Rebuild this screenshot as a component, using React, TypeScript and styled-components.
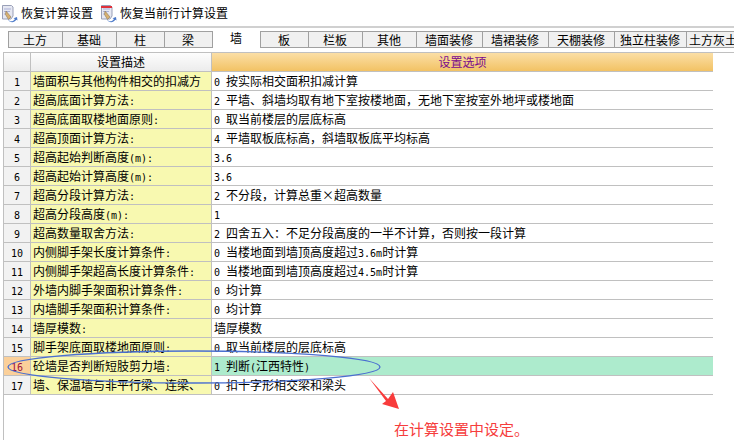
import { createGlobalStyle, styled } from 'styled-components';

const GlobalStyle = createGlobalStyle`
  html, body {
    margin: 0;
    width: 734px;
    height: 440px;
    overflow: hidden;
    background: #fff;
  }
  * {
    box-sizing: border-box;
  }
`;

const tabs = [
  { name: '土方', width: 54 },
  { name: '基础', width: 54 },
  { name: '柱', width: 48 },
  { name: '梁', width: 48 },
  { name: '墙', width: 48, active: true },
  { name: '板', width: 48 },
  { name: '栏板', width: 54 },
  { name: '其他', width: 54 },
  { name: '墙面装修', width: 66 },
  { name: '墙裙装修', width: 66 },
  { name: '天棚装修', width: 66 },
  { name: '独立柱装修', width: 72 },
  { name: '土方灰土', width: 54 },
];

const rows = [
  ['墙面积与其他构件相交的扣减方', '0 按实际相交面积扣减计算'],
  ['超高底面计算方法:', '2 平墙、斜墙均取有地下室按楼地面\uFF0C无地下室按室外地坪或楼地面'],
  ['超高底面取楼地面原则:', '0 取当前楼层的层底标高'],
  ['超高顶面计算方法:', '4 平墙取板底标高\uFF0C斜墙取板底平均标高'],
  ['超高起始判断高度(m):', '3.6'],
  ['超高起始计算高度(m):', '3.6'],
  ['超高分段计算方法:', '2 不分段\uFF0C计算总重×超高数量'],
  ['超高分段高度(m):', '1'],
  ['超高数量取舍方法:', '2 四舍五入\uFF1A不足分段高度的一半不计算\uFF0C否则按一段计算'],
  ['内侧脚手架长度计算条件:', '0 当楼地面到墙顶高度超过3.6m时计算'],
  ['内侧脚手架超高长度计算条件:', '0 当楼地面到墙顶高度超过4.5m时计算'],
  ['外墙内脚手架面积计算条件:', '0 均计算'],
  ['内墙脚手架面积计算条件:', '0 均计算'],
  ['墙厚模数:', '墙厚模数'],
  ['脚手架底面取楼地面原则:', '0 取当前楼层的层底标高'],
  ['砼墙是否判断短肢剪力墙:', '1 判断(江西特性)'],
  ['墙、保温墙与非平行梁、连梁、', '0 扣十字形相交梁和梁头'],
];

const Page = styled.div`
  position: relative;
  width: 734px;
  height: 440px;
  overflow: hidden;
  font-family: 'Noto Sans CJK SC', 'Liberation Sans', sans-serif;
  font-size: 12px;
  color: #000;
`;

const Toolbar = styled.div`
  display: flex;
  align-items: center;
  gap: 7px;
  height: 28px;
  padding: 0 0 1px 1px;
  border-bottom: 2px solid #d0d0d0;
`;

const ToolButton = styled.div`
  display: flex;
  align-items: center;
  gap: 3px;
  white-space: nowrap;
`;

const TabStrip = styled.div`
  display: flex;
  height: 17px;
  margin: 3px 0 0 8px;
  border-left: 1px solid #a0a0a0;
`;

const Tab = styled.div<{ $width: number; $active?: boolean }>`
  flex: none;
  width: ${(p) => p.$width}px;
  padding-right: 1px;
  line-height: ${(p) => (p.$active ? '14px' : '15px')};
  text-align: center;
  white-space: nowrap;
  background: ${(p) => (p.$active ? '#fff' : '#f0f0f0')};
  border-style: solid;
  border-color: #a0a0a0;
  border-width: ${(p) => (p.$active ? '0 1px 0 0' : '1px 1px 1px 0')};
`;

const TableFrame = styled.div`
  height: 388px;
  margin: 4px 0 0 3px;
  border-left: 1px solid #c0c0c0;
  border-top: 1px solid #c0c0c0;
`;

const Grid = styled.div`
  display: grid;
  grid-template-columns: 27px 181px 501px;
  grid-auto-rows: 19px;
  width: 709px;
  border-right: 1px solid #c0c0c0;
`;

const Cell = styled.div`
  padding-left: 2px;
  line-height: 18px;
  white-space: nowrap;
  overflow: hidden;
  border-bottom: 1px solid #c0c0c0;
`;

const HeaderCell = styled(Cell)`
  text-align: center;
  padding-left: 0;
  background: linear-gradient(#fdfdfd, #ececec);
  border-right: 1px solid #c0c0c0;
`;

const OptionHeader = styled(Cell)`
  text-align: center;
  padding-left: 0;
  color: #7a0a8c;
  background: linear-gradient(#fbdfa6, #f2c264);
`;

const RowNumber = styled(Cell)<{ $current?: boolean }>`
  padding-left: 0;
  text-align: center;
  background: ${(p) => (p.$current ? '#fbd09a' : '#f2f2f2')};
  color: ${(p) => (p.$current ? '#a0103c' : '#000')};
  border-right: 1px solid #c0c0c0;
`;

const DescCell = styled(Cell)`
  background: #f8f9b0;
  border-right: 1px solid #c0c0c0;
`;

const ValueCell = styled(Cell)<{ $current?: boolean }>`
  background: ${(p) => (p.$current ? '#adebcd' : '#fff')};
`;

// the latin part of the grid text is 6px per character, half of the CJK width
const Latin = styled.span`
  font-family: 'DejaVu Sans Mono', monospace;
  font-size: 10px;
  line-height: 1;
  white-space: pre;
`;

const Ellipse = styled.svg`
  position: absolute;
  left: 6px;
  top: 349px;
`;

const Arrow = styled.svg`
  position: absolute;
  left: 366px;
  top: 376px;
`;

const Note = styled.div`
  position: absolute;
  left: 394px;
  top: 419px;
  font-size: 15px;
  line-height: 20px;
  color: #f63d3d;
  white-space: nowrap;
`;

const mixed = (text: string) =>
  text
    .split(/([\x20-\x7e]+)/)
    .map((part, i) => (i % 2 === 1 ? <Latin key={i}>{part}</Latin> : part));

const RestoreIcon = ({ marked }: { marked?: boolean }) => (
  <svg width="17" height="20" viewBox="0 0 17 20">
    <path d="M1.500 2.500h9l1.500 1.500v9l-2 3h-8.500z" fill="#e6e8f2" stroke="#9aa0b8" />
    <path d="M3 6h7M3 8.500h6M3 11h4" stroke="#aab0d8" />
    {marked && <path d="M1 4h11" stroke="#e0303a" strokeWidth="2" />}
    <path d="M5 8l5 6-2.500 2.500-3-5z" fill="#d8b070" stroke="#8d7a5a" strokeWidth="0.6" />
    <path d="M7 16.500c2 2.500 5 2.500 7-.5l-1.500-.8 3.500-1.200.5 3.500-1.200-.8c-2 3-6 3.800-8.800-.7z" fill="#4a78c8" />
  </svg>
);

function Row({ index, desc, value }: { index: number; desc: string; value: string }) {
  const current = index === 16;
  return (
    <>
      <RowNumber $current={current}>
        <Latin>{index}</Latin>
      </RowNumber>
      <DescCell>{mixed(desc)}</DescCell>
      <ValueCell $current={current}>{mixed(value)}</ValueCell>
    </>
  );
}

export default function App() {
  return (
    <Page>
      <GlobalStyle />
      <Toolbar>
        <ToolButton>
          <RestoreIcon />
          恢复计算设置
        </ToolButton>
        <ToolButton>
          <RestoreIcon marked />
          恢复当前行计算设置
        </ToolButton>
      </Toolbar>
      <TabStrip>
        {tabs.map((tab) => (
          <Tab key={tab.name} $width={tab.width} $active={tab.active}>
            {tab.name}
          </Tab>
        ))}
      </TabStrip>
      <TableFrame>
        <Grid>
          <HeaderCell />
          <HeaderCell>设置描述</HeaderCell>
          <OptionHeader>设置选项</OptionHeader>
          {rows.map(([desc, value], i) => (
            <Row key={i} index={i + 1} desc={desc} value={value} />
          ))}
        </Grid>
      </TableFrame>
      <Ellipse width="376" height="36" viewBox="0 0 376 36">
        <ellipse cx="188" cy="18" rx="186" ry="16" fill="none" stroke="#4a6fd0" strokeWidth="1.3" />
      </Ellipse>
      <Arrow width="36" height="36" viewBox="0 0 36 36">
        <path d="M3 2L22 23L27 16L33 33L16 28L20 25z" fill="#f83c3c" />
      </Arrow>
      <Note>在计算设置中设定。</Note>
    </Page>
  );
}
